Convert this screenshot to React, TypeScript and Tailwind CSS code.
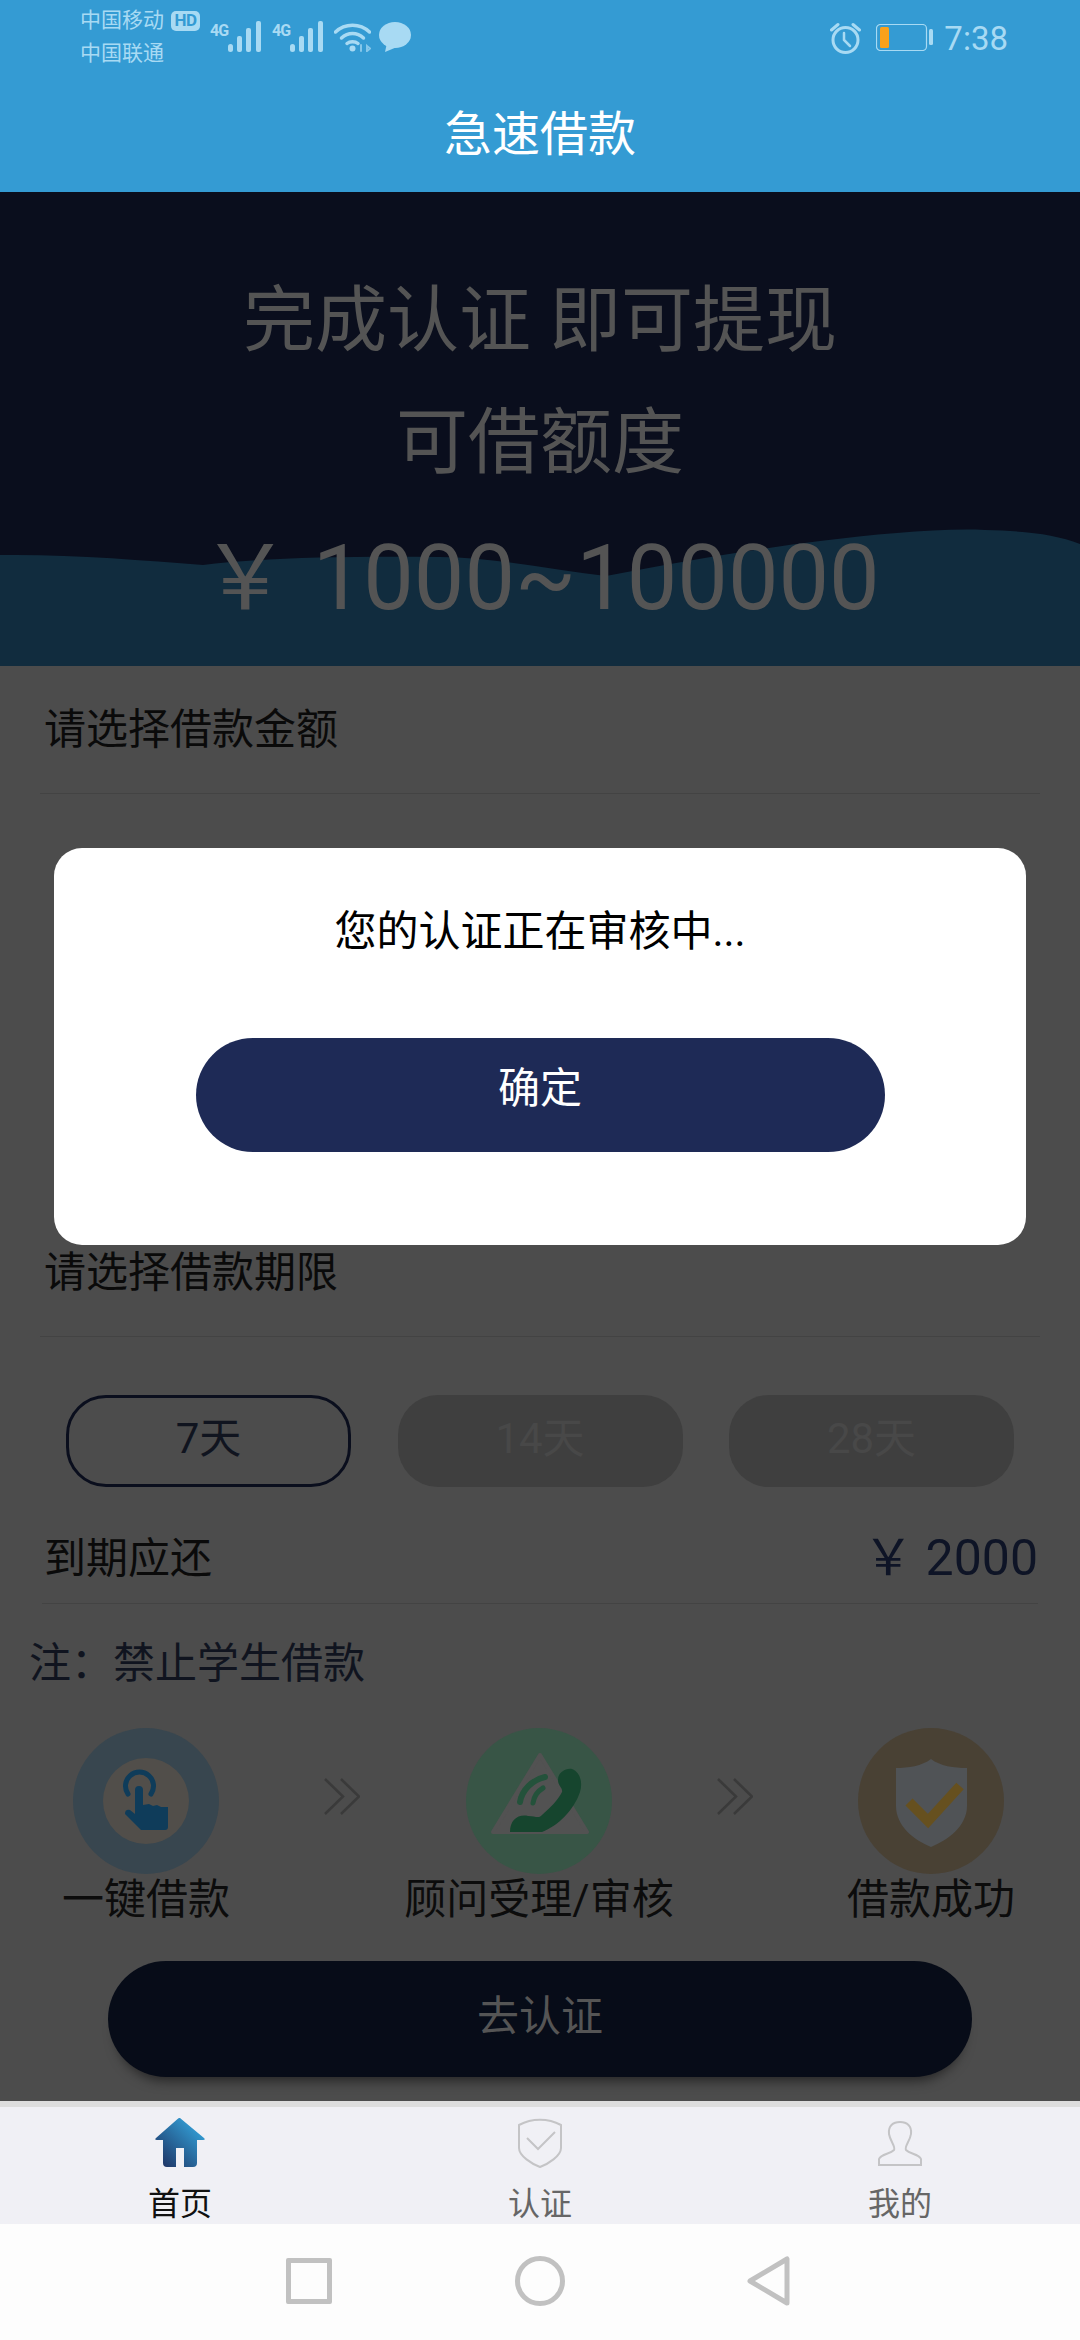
import React from "react";

function Signal() {
  return (
    <div className="flex items-start">
      <span className="mt-[-1px] w-[18px] text-[16px] leading-[18px] font-bold tracking-[-1px] text-[#a8daf3]">4G</span>
      <svg width="33" height="31" viewBox="0 0 33 31" className="mt-[-2px]" fill="#a8daf3">
        <rect x="0" y="23" width="5" height="8" rx="2.5" />
        <rect x="9" y="15" width="5" height="16" rx="2" />
        <rect x="18" y="7" width="5" height="24" rx="2" />
        <rect x="28" y="0" width="5" height="31" rx="2" />
      </svg>
    </div>
  );
}

function StatusBar() {
  return (
    <div className="flex h-[72px] items-start justify-between pr-[72px] pl-[80px]">
      <div className="flex items-start">
        <div className="w-[130px] pt-[4px] text-[21px] leading-[33px] text-[#a8daf3]">
          <div className="flex items-center">
            <span className="w-[91px]">中国移动</span>
            <span className="flex h-[20px] w-[29px] items-center justify-center rounded-[5px] bg-[#a8daf3] text-[17px] leading-none font-bold tracking-[-0.5px] text-[#349bd3]">HD</span>
          </div>
          <div>中国联通</div>
        </div>
        <div className="mt-[23px] flex items-start gap-[11px]">
          <Signal />
          <Signal />
          <svg width="37" height="30" viewBox="0 0 37 30" className="mt-[-1px]" fill="none" stroke="#a8daf3" strokeLinecap="round">
            <path d="M1.5 10 C11 1 26 1 35.5 10" strokeWidth="3.5" />
            <path d="M7.5 16 C14 10 23 10 29.5 16" strokeWidth="3.5" />
            <path d="M13 21.5 C16 19 21 19 24 21.5" strokeWidth="3.5" />
            <circle cx="18.5" cy="26.5" r="3" fill="#a8daf3" stroke="none" />
            <path d="M27 23 V29 M33 24 L36 26.5 L33 29 Z" strokeWidth="2" opacity="0.7" />
          </svg>
          <svg width="32" height="30" viewBox="0 0 32 30" className="ml-[-3px] mt-[-1px]" fill="#a8daf3">
            <ellipse cx="16" cy="13" rx="16" ry="13" />
            <path d="M8 21 L6 30 L18 25 Z" />
          </svg>
        </div>
      </div>
      <div className="mt-[20px] flex items-center">
        <svg width="31" height="32" viewBox="0 0 31 32" fill="none" stroke="#a8daf3" strokeWidth="3" strokeLinecap="round">
          <circle cx="15.5" cy="18" r="12.5" />
          <path d="M14 11 V18 L20 24" strokeWidth="2.5" />
          <path d="M1.5 8 L8 2.5 M29.5 8 L23 2.5" />
        </svg>
        <svg width="57" height="27" viewBox="0 0 57 27" className="ml-[15px]" fill="none">
          <rect x="0.5" y="0.5" width="50" height="26" rx="4" stroke="#a8daf3" strokeWidth="1.2" />
          <rect x="4" y="3" width="9" height="21" rx="1.5" fill="#f9a11b" />
          <rect x="53" y="5" width="4" height="16" rx="1.5" fill="#a8daf3" />
        </svg>
        <span className="mt-[3px] ml-[11px] text-[33px] leading-[32px] text-[#a8daf3]">7:38</span>
      </div>
    </div>
  );
}

function Hero() {
  return (
    <div className="relative h-[474px] bg-[#0a0e1d] pt-[68px] text-center text-[#545454]">
      <svg width="1080" height="474" viewBox="0 0 1080 474" className="absolute top-0 left-0" fill="#112c3e">
        <path d="M0 363 C70 362 140 368 203 373 C260 366 340 364 440 365 C500 366 555 378 606 384 C680 370 760 356 820 349 C880 342 940 336 985 338 C1025 339 1055 342 1080 352 V474 H0 Z" />
      </svg>
      <div className="relative text-[72px] leading-[122px]">完成认证 即可提现</div>
      <div className="relative text-[72px] leading-[122px]">可借额度</div>
      <div className="relative text-[90px] leading-[150px]">{"\uFFE5 1000~100000"}</div>
    </div>
  );
}

function SectionLabel({ text }: { text: string }) {
  return (
    <div className="mx-[40px] flex h-[128px] items-start border-b border-[#434343] pt-[40px] pl-[4px] text-[42px] leading-[48px] text-[#0a0a0a]">
      {text}
    </div>
  );
}

function Chip({ text, active }: { text: string; active?: boolean }) {
  return active ? (
    <div className="flex h-[92px] w-[285px] items-center justify-center rounded-[40px] border-[3px] border-[#0a0e1d] pb-[6px] text-[42px] text-[#10141f]">
      {text}
    </div>
  ) : (
    <div className="flex h-[92px] w-[285px] items-center justify-center rounded-[40px] bg-[#3f3f3f] pb-[6px] text-[42px] text-[#484848]">
      {text}
    </div>
  );
}

function Chevrons() {
  return (
    <svg width="36" height="37" viewBox="0 0 36 37" className="mt-[50px] justify-self-center" fill="none" stroke="#3a3a3a" strokeWidth="2.5">
      <path d="M1 1 L19 18.5 L1 36" />
      <path d="M17 1 L35 18.5 L17 36" />
    </svg>
  );
}

function Step({ label, children }: { label: string; children: React.ReactNode }) {
  return (
    <div className="flex flex-col items-center">
      {children}
      <div className="mt-[3px] text-[42px] leading-[46px] whitespace-nowrap text-[#0c0c0c]">{label}</div>
    </div>
  );
}

function Steps() {
  return (
    <div className="grid grid-cols-[292px_100px_294px_98px_294px]">
      <Step label="一键借款">
        <svg width="146" height="146" viewBox="0 0 146 146">
          <circle cx="73" cy="73" r="73" fill="#38464f" />
          <circle cx="73" cy="73" r="43" fill="#514e4a" />
          <path d="M55 66 A14 14 0 1 1 78 66" fill="none" stroke="#0f3c5a" strokeWidth="5" strokeLinecap="round" />
          <path d="M62 62 a4 4 0 0 1 8 0 L70 77 L76 76 L80 78 L84 77 L88 79 L95 79 L95 99 Q95 102 92 102 L68 102 L52 86 Q52 81 57 82 L62 86 Z" fill="#0f3c5a" />
        </svg>
      </Step>
      <Chevrons />
      <Step label="顾问受理/审核">
        <svg width="146" height="146" viewBox="0 0 146 146">
          <circle cx="73" cy="73" r="73" fill="#385546" />
          <path d="M74 27 L121 104 H27 Z" fill="#525252" stroke="#525252" strokeWidth="4" strokeLinejoin="round" />
          <path d="M44 104 C44 92 52 86 62 88 C70 88 72 91 76 87 C84 80 92 72 96 64 C97 60 92 58 92 52 C92 44 100 40 106 41 C114 44 117 54 114 64 C108 82 92 98 76 104 Z" fill="#16452e" />
          <path d="M54 74 C56 62 66 52 79 49" fill="none" stroke="#24523b" strokeWidth="6" strokeLinecap="round" />
          <path d="M67 75 C68 68 72 63 77 60" fill="none" stroke="#24523b" strokeWidth="5" strokeLinecap="round" />
        </svg>
      </Step>
      <Chevrons />
      <Step label="借款成功">
        <svg width="146" height="146" viewBox="0 0 146 146">
          <circle cx="73" cy="73" r="73" fill="#494134" />
          <path d="M73 31 C82 38 96 40 109 40 V78 C109 98 90 112 73 119 C56 112 38 98 38 78 V40 C50 40 64 38 73 31 Z" fill="#505356" />
          <path d="M51 74 L70 93 L102 58" fill="none" stroke="#66501f" strokeWidth="10" />
        </svg>
      </Step>
    </div>
  );
}

function TabBar() {
  return (
    <div className="grid h-[123px] grid-cols-3 border-t-[6px] border-[#dddddd] bg-[#f0f0f5] pt-[11px] text-center text-[32px] leading-[40px]">
      <div className="flex flex-col items-center text-[#111111]">
        <svg width="50" height="50" viewBox="0 0 50 50">
          <defs>
            <linearGradient id="homeFill" x1="1" y1="0" x2="0" y2="1">
              <stop offset="0.15" stopColor="#339fd6" />
              <stop offset="1" stopColor="#1c2a5a" />
            </linearGradient>
          </defs>
          <path d="M25 0 L49 20 Q51 22 48 22 H42 V45 Q42 49 38 49 H29 V30 H21 V49 H12 Q8 49 8 45 V22 H2 Q-1 22 1 20 L22 1.5 Q25 -1 25 0 Z" fill="url(#homeFill)" />
        </svg>
        <span className="mt-[16px]">首页</span>
      </div>
      <div className="flex flex-col items-center text-[#666666]">
        <svg width="44" height="50" viewBox="0 0 44 50" fill="none" stroke="#c4c4c6" strokeWidth="2">
          <path d="M1 7 C14 0 30 0 43 7 V30 C43 38 30 46 22 49 C14 46 1 38 1 30 Z" />
          <path d="M9 20 L20 31 L37 14" />
        </svg>
        <span className="mt-[16px]">认证</span>
      </div>
      <div className="flex flex-col items-center text-[#666666]">
        <svg width="44" height="50" viewBox="0 0 44 50" fill="none" stroke="#c4c4c6" strokeWidth="2">
          <path d="M1 47 V41 C3 36 12 36 16 32 C18 29 12 23 11 16 C10 8 15 4 22 4 C29 4 34 8 33 16 C32 23 26 29 28 32 C32 36 41 36 43 41 V47 Z" />
        </svg>
        <span className="mt-[16px]">我的</span>
      </div>
    </div>
  );
}

function NavBar() {
  return (
    <div className="flex h-[116px] items-center bg-[#fdfdfd] pb-[3px] pl-[286px]">
      <div className="h-[46px] w-[46px] rounded-[2px] border-[5px] border-[#c1c1c1]" />
      <svg width="50" height="50" viewBox="0 0 50 50" className="ml-[183px]" fill="none" stroke="#c1c1c1" strokeWidth="5">
        <circle cx="25" cy="25" r="22.5" />
      </svg>
      <svg width="43" height="50" viewBox="0 0 43 50" className="ml-[182px]" fill="none" stroke="#c1c1c1" strokeWidth="5" strokeLinejoin="round">
        <path d="M40 3 V47 L3 25 Z" />
      </svg>
    </div>
  );
}

export default function App() {
  return (
    <div className="flex h-[2340px] w-[1080px] flex-col overflow-hidden font-['Roboto','Noto_Sans_CJK_SC',sans-serif]">
      <div className="h-[192px] bg-[#349bd3]">
        <StatusBar />
        <div className="pt-[33px] text-center text-[48px] leading-[60px] text-white">急速借款</div>
      </div>

      <div className="relative h-[1909px] bg-[#4c4c4c]">
        <Hero />
        <SectionLabel text="请选择借款金额" />
        <div className="h-[415px]" />
        <SectionLabel text="请选择借款期限" />
        <div className="mt-[58px] flex justify-between px-[66px]">
          <Chip text="7天" active />
          <Chip text="14天" />
          <Chip text="28天" />
        </div>
        <div className="mx-[42px] flex h-[117px] items-center justify-between border-b border-[#434343] pt-[26px] pr-0 pl-[2px] text-[#0a0a0a]">
          <span className="text-[42px]">到期应还</span>
          <span className="text-[50px] text-[#0e1426]">{"\uFFE5 2000"}</span>
        </div>
        <div className="h-[124px] pl-[29px] text-[42px] leading-[120px] text-[#10141f]">{"注\uFF1A禁止学生借款"}</div>
        <Steps />
        <div className="mx-[108px] mt-[38px] flex h-[116px] items-center justify-center rounded-[58px] bg-[#070c18] pb-[6px] text-[42px] text-[#555555] shadow-[0_12px_12px_-8px_rgba(0,0,0,0.5)]">
          去认证
        </div>

        <div className="absolute top-[656px] left-[54px] flex h-[397px] w-[972px] flex-col items-center rounded-[28px] bg-white">
          <div className="mt-[54px] text-[42px] leading-[60px] text-black">您的认证正在审核中...</div>
          <div className="mt-[76px] flex h-[114px] w-[689px] items-center justify-center rounded-[57px] bg-[#1e2a56] pb-[14px] text-[42px] text-white">
            确定
          </div>
        </div>
      </div>

      <TabBar />
      <NavBar />
    </div>
  );
}
